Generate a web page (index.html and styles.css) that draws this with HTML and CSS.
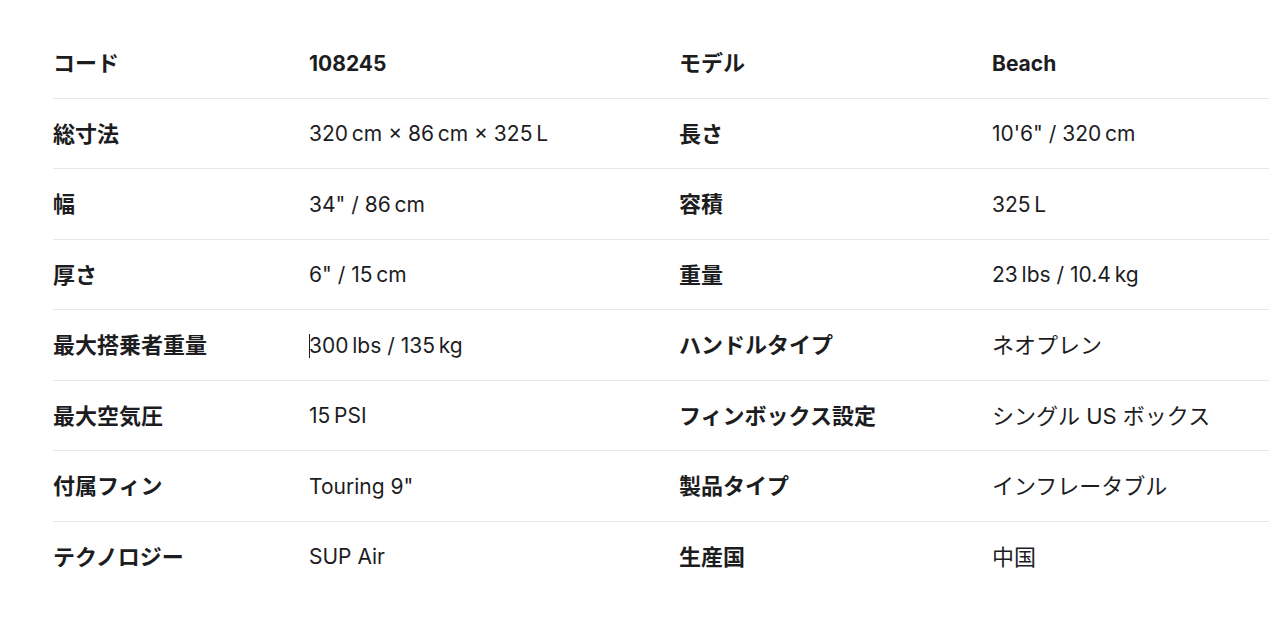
FILE: index.html
```html
<!DOCTYPE html>
<html lang="ja">
<head>
<meta charset="utf-8">
<title>Specs</title>
<link rel="stylesheet" href="styles.css">
</head>
<body>
<div class="specs">
  <div class="row head">
    <div class="label">コード</div><div class="value">108245</div>
    <div class="label">モデル</div><div class="value">Beach</div>
  </div>
  <div class="row">
    <div class="label">総寸法</div><div class="value">320&thinsp;cm × 86&thinsp;cm × 325&thinsp;L</div>
    <div class="label">長さ</div><div class="value">10'6" / 320&thinsp;cm</div>
  </div>
  <div class="row">
    <div class="label">幅</div><div class="value">34" / 86&thinsp;cm</div>
    <div class="label">容積</div><div class="value">325&thinsp;L</div>
  </div>
  <div class="row">
    <div class="label">厚さ</div><div class="value">6" / 15&thinsp;cm</div>
    <div class="label">重量</div><div class="value">23&thinsp;lbs / 10.4&thinsp;kg</div>
  </div>
  <div class="row">
    <div class="label">最大搭乗者重量</div><div class="value"><span class="caret"></span>300&thinsp;lbs / 135&thinsp;kg</div>
    <div class="label">ハンドルタイプ</div><div class="value ja">ネオプレン</div>
  </div>
  <div class="row">
    <div class="label">最大空気圧</div><div class="value">15&thinsp;PSI</div>
    <div class="label">フィンボックス設定</div><div class="value ja">シングル US ボックス</div>
  </div>
  <div class="row">
    <div class="label">付属フィン</div><div class="value">Touring 9"</div>
    <div class="label">製品タイプ</div><div class="value ja">インフレータブル</div>
  </div>
  <div class="row last">
    <div class="label">テクノロジー</div><div class="value">SUP Air</div>
    <div class="label">生産国</div><div class="value ja">中国</div>
  </div>
</div>
</body>
</html>
```

FILE: styles.css
```css
html, body {
  margin: 0;
  background: #ffffff;
}
body {
  padding: 28px 11px 0 53px;
  font-family: Inter, "Noto Sans CJK JP", sans-serif;
  font-size: 21px;
  color: #1d1d1f;
}
.specs {
  width: 1216px;
}
.row {
  display: grid;
  grid-template-columns: 256px 370px 313px 1fr;
  align-items: center;
  height: 69.5px;
  border-bottom: 1px solid #e6e6e6;
}
.row.last {
  border-bottom: none;
}
.label {
  font-weight: 700;
  font-size: 22px;
  margin-bottom: 3px;
}
.value {
  font-weight: 400;
  white-space: nowrap;
  margin-top: 1px;
}
.value.ja {
  font-size: 22px;
  margin-top: 0;
  margin-bottom: 3px;
}
.head .value {
  font-weight: 700;
}
.caret {
  display: inline-block;
  width: 1px;
  height: 24px;
  margin-right: -1px;
  background: #1d1d1f;
  vertical-align: -5px;
}
```
